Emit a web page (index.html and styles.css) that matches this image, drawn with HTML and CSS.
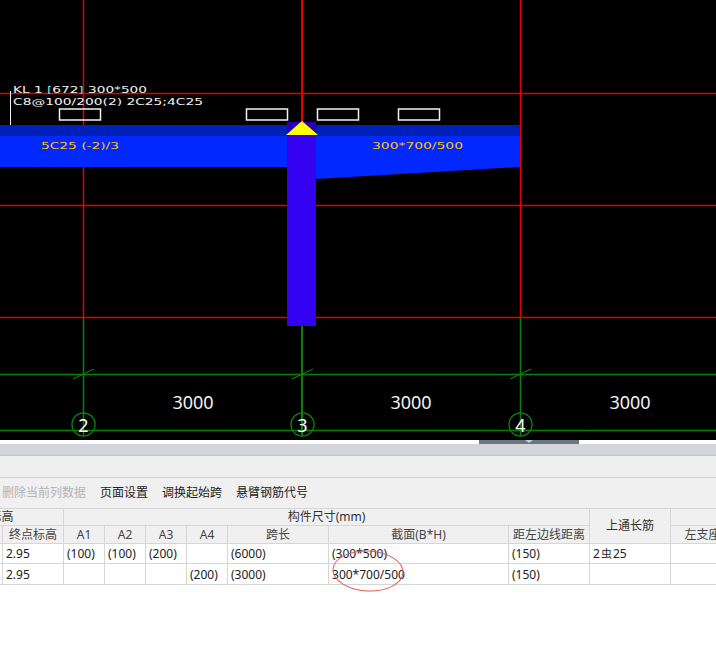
FILE: index.html
```html
<!DOCTYPE html>
<html lang="zh-CN">
<head>
<meta charset="utf-8">
<title>梁平法表格</title>
<link rel="stylesheet" href="styles.css">
</head>
<body>
<svg class="canvas" width="716" height="440" viewBox="0 0 716 440">
  <path class="red" d="M0 93.5H716M0 205.5H716M0 317.5H716M83.5 0V318M520.5 0V318"/>
  <path class="red red-wide" d="M302 0V122"/>
  <path class="green" d="M0 374.5H716M0 430.5H716M83.5 318V436M520.5 318V436"/>
  <path class="green green-wide" d="M302 326V436"/>
  <path class="tick" d="M73 379L94 369M292 379L313 369M510 379L531 369"/>
  <circle class="axis" cx="83.5" cy="424.5" r="11.5"/>
  <circle class="axis" cx="302.5" cy="424.5" r="11.5"/>
  <circle class="axis" cx="520.5" cy="424.5" r="11.5"/>
  <text class="axis-no" x="83.5" y="432">2</text>
  <text class="axis-no" x="302.5" y="432">3</text>
  <text class="axis-no" x="520.5" y="432">4</text>
  <text class="dim" x="193" y="409">3000</text>
  <text class="dim" x="411" y="409">3000</text>
  <text class="dim" x="630" y="409">3000</text>

  <rect class="beam-top" x="0" y="125" width="520" height="11"/>
  <path class="beam" d="M0 136H287V167H0ZM316 136H520V167L316 179Z"/>
  <rect class="column" x="287" y="136" width="29" height="190"/>
  <rect class="column-top" x="287" y="122" width="29" height="14"/>
  <path class="cap" d="M286 135L302 121L318 135Z"/>

  <rect class="slot" x="59.5" y="109" width="41" height="11"/>
  <rect class="slot" x="246.5" y="109" width="41" height="11"/>
  <rect class="slot" x="317.5" y="109" width="41" height="11"/>
  <rect class="slot" x="398.5" y="109" width="41" height="11"/>
  <path class="leader" d="M10.5 91V125"/>
  <text class="note" x="13" y="93" textLength="134" lengthAdjust="spacingAndGlyphs">KL 1 <tspan class="bracket">[</tspan>672<tspan class="bracket">]</tspan> 300*500</text>
  <text class="note" x="13" y="105" textLength="190" lengthAdjust="spacingAndGlyphs">C8@100/200(2) 2C25;4C25</text>
  <text class="note note-y" x="41" y="149" textLength="78" lengthAdjust="spacingAndGlyphs">5C25 (-2)/3</text>
  <text class="note note-y" x="372" y="149" textLength="91" lengthAdjust="spacingAndGlyphs">300*700/500</text>
</svg>

<div class="splitter"><div class="handle"><span class="handle-arrow"></span></div></div>
<div class="band"></div>
<div class="strip"></div>
<div class="toolbar">
  <span class="tool tool-off">删除当前列数据</span>
  <span class="tool">页面设置</span>
  <span class="tool">调换起始跨</span>
  <span class="tool">悬臂钢筋代号</span>
</div>

<div class="grid-wrap">
  <table class="grid">
    <colgroup>
      <col class="c-start"><col class="c-end"><col class="c-a"><col class="c-a"><col class="c-a"><col class="c-a">
      <col class="c-span"><col class="c-sec"><col class="c-off"><col class="c-top"><col class="c-left">
    </colgroup>
    <thead>
      <tr class="h1">
        <th colspan="2" class="level">标高</th>
        <th colspan="7">构件尺寸(mm)</th>
        <th rowspan="2">上通长筋</th>
        <th></th>
      </tr>
      <tr class="h2">
        <th></th><th>终点标高</th><th>A1</th><th>A2</th><th>A3</th><th>A4</th>
        <th>跨长</th><th>截面(B*H)</th><th>距左边线距离</th><th>左支座钢筋</th>
      </tr>
    </thead>
    <tbody>
      <tr class="r1">
        <td></td><td>2.95</td><td>(100)</td><td>(100)</td><td>(200)</td><td></td>
        <td>(6000)</td><td>(300*500)</td><td>(150)</td><td>2<span class="rebar">虫</span>25</td><td></td>
      </tr>
      <tr class="r2">
        <td></td><td>2.95</td><td></td><td></td><td></td><td>(200)</td>
        <td>(3000)</td><td>300*700/500</td><td>(150)</td><td></td><td></td>
      </tr>
    </tbody>
  </table>
  <svg class="mark" width="80" height="50" viewBox="0 0 80 50"><ellipse class="mark-line" cx="39" cy="25" rx="35" ry="20" transform="rotate(3 39 25)"/></svg>
</div>
</body>
</html>
```
FILE: styles.css
```css
* { box-sizing: border-box; }
html, body { margin: 0; padding: 0; background: #fff; overflow: hidden; }
body {
  width: 716px;
  height: 645px;
  font-family: "Noto Sans", "Noto Sans CJK SC", sans-serif;
  font-size: 12px;
  color: #222;
}

/* drawing canvas */
.canvas { display: block; background: #000; }
.red { stroke: #e80000; stroke-width: 1.5; fill: none; }
.red-wide { stroke-width: 2; }
.green { stroke: #0a800a; stroke-width: 1.5; fill: none; }
.green-wide { stroke-width: 2; }
.tick { stroke: #0a800a; stroke-width: 1.2; fill: none; }
.axis { stroke: #0a800a; stroke-width: 1.4; fill: none; }
.axis-no { fill: #fff; font-size: 18px; text-anchor: middle; font-family: "Noto Sans", sans-serif; }
.dim { fill: #f2f2f2; font-size: 18px; text-anchor: middle; font-family: "Noto Sans", sans-serif; }
.beam-top { fill: #0020b8; }
.beam { fill: #0028ff; }
.column { fill: #3300f0; }
.column-top { fill: #2a00b4; }
.cap { fill: #ffff00; }
.slot { fill: none; stroke: #f4f4f4; stroke-width: 1.5; }
.leader { stroke: #f0f0f0; stroke-width: 1; fill: none; }
.note { fill: #f4f4f4; font-size: 8.5px; font-family: "DejaVu Sans", sans-serif; }
.note-y { fill: #ffc400; }
.bracket { fill: #7fe0e8; }

/* splitter and bands */
.splitter { height: 4px; background: #fff; padding-left: 479px; }
.handle { width: 100px; height: 4px; background: #6b7683; display: flex; justify-content: center; }
.handle-arrow { width: 0; height: 0; border-left: 4px solid transparent; border-right: 4px solid transparent; border-top: 3px solid #c8ccd0; }
.band { height: 12px; background: #d4d5da; border-bottom: 1px solid #c2c3ca; }
.strip { height: 22px; background: #eeeeee; border-bottom: 1px solid #cfcfcf; }

.toolbar {
  height: 30px;
  background: #f0f0f0;
  display: flex;
  align-items: center;
  gap: 14px;
  padding-left: 2px;
}
.tool { color: #222; line-height: 30px; }
.tool-off { color: #b4b4b4; }

/* table */
.grid-wrap { position: relative; background: #fff; height: 137px; overflow: hidden; }
.grid {
  border-collapse: collapse;
  table-layout: fixed;
  margin-left: -59px;
  width: 817px;
}
.c-start { width: 61px; }
.c-end { width: 61px; }
.c-a { width: 41px; }
.c-span { width: 101px; }
.c-sec { width: 180px; }
.c-off { width: 81px; }
.c-top { width: 81px; }
.c-left { width: 88px; }
.grid th, .grid td {
  border: 1px solid #d6d6d6;
  padding: 0 3px;
  white-space: nowrap;
  overflow: hidden;
  font-size: 12px;
  line-height: 14px;
}
.grid th { background: #f0f0f0; color: #444; font-weight: 400; text-align: center; }
.grid th.level { padding-right: 5px; }
.grid td { background: #fff; color: #222; text-align: left; }
.h1 th { height: 17px; color: #333; }
.h2 th { height: 18px; }
.r1 td { height: 20px; }
.r2 td { height: 21px; padding-top: 1px; }
.rebar { font-size: 11px; padding: 0 1px; }
.mark { position: absolute; left: 329px; top: 38px; }
.mark-line { fill: none; stroke: #e25a5a; stroke-width: 1; }
```
